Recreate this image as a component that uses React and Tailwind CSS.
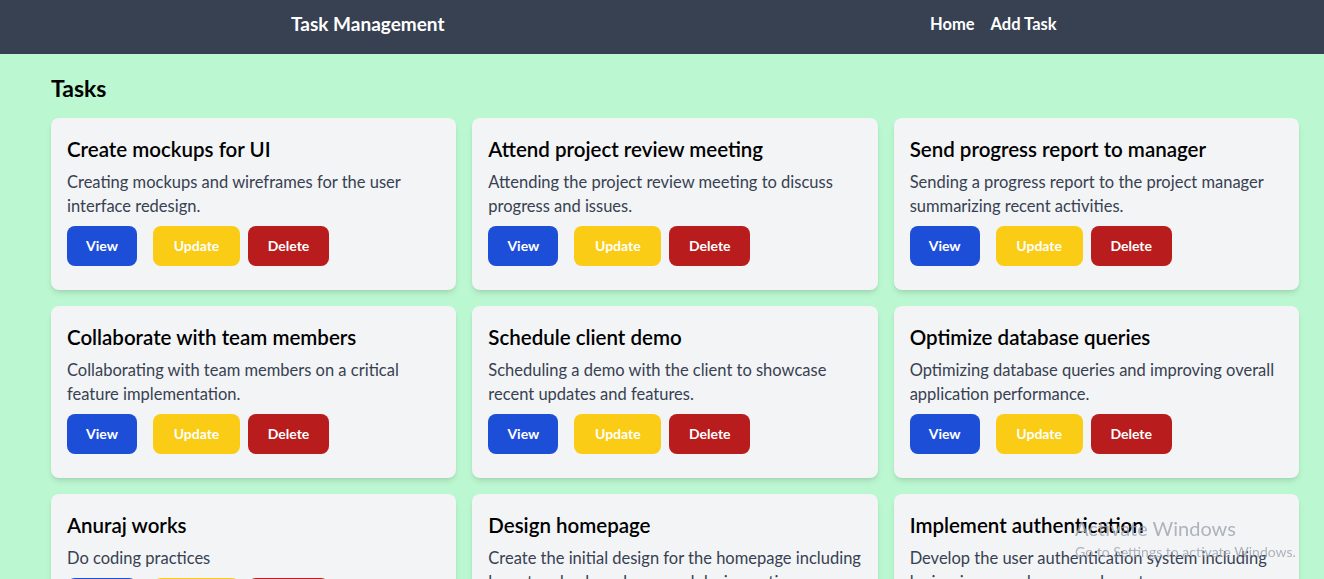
const tasks = [
  {
    title: "Create mockups for UI",
    description: "Creating mockups and wireframes for the user interface redesign.",
  },
  {
    title: "Attend project review meeting",
    description: "Attending the project review meeting to discuss progress and issues.",
  },
  {
    title: "Send progress report to manager",
    description: "Sending a progress report to the project manager summarizing recent activities.",
  },
  {
    title: "Collaborate with team members",
    description: "Collaborating with team members on a critical feature implementation.",
  },
  {
    title: "Schedule client demo",
    description: "Scheduling a demo with the client to showcase recent updates and features.",
  },
  {
    title: "Optimize database queries",
    description: "Optimizing database queries and improving overall application performance.",
  },
  {
    title: "Anuraj works",
    description: "Do coding practices",
  },
  {
    title: "Design homepage",
    description: "Create the initial design for the homepage including layout and color scheme and design options.",
  },
  {
    title: "Implement authentication",
    description: "Develop the user authentication system including login, signup and password reset.",
  },
];

function TaskCard({ task }) {
  return (
    <div className="rounded-lg bg-[#f3f4f6] px-4 pb-4 pt-[17px] shadow-md">

      {/* Title */}

      <h2 className="text-[20.5px] font-semibold leading-7 text-black">
        {task.title}
      </h2>

      {/* Description */}

      <p className="mt-[7px] text-[16.5px] leading-6 text-[#374151]">
        {task.description}
      </p>

      {/* Actions */}

      <div className="mb-2 mt-2 flex">
        <button className="mr-4 w-[70px] rounded-lg bg-[#1d4ed8] py-2.5 text-sm font-bold leading-5 text-white">
          View
        </button>
        <button className="mr-2 w-[87px] rounded-lg bg-[#facc15] py-2.5 text-sm font-bold leading-5 text-white">
          Update
        </button>
        <button className="w-[81px] rounded-lg bg-[#b91c1c] py-2.5 text-sm font-bold leading-5 text-white">
          Delete
        </button>
      </div>

    </div>
  );
}

export default function App() {
  return (
    <div className="min-h-screen bg-[#bbf7d0] font-['Lato','Noto_Sans',sans-serif]">

      {/* Navbar */}

      <nav className="flex h-[54px] items-start bg-[#374151] pt-[12px] text-white">
        <div className="w-[639px] pl-[291px]">
          <h1 className="text-[19px] font-bold leading-6">
            Task Management
          </h1>
        </div>
        <div className="flex gap-4 pl-[291px] text-[16.5px] font-bold leading-6">
          <a href="#">Home</a>
          <a href="#">Add Task</a>
        </div>
      </nav>

      {/* Tasks */}

      <main className="pl-[51px] pr-[25px] pt-[18px]">
        <h2 className="mb-[14px] text-[23px] font-bold leading-8 text-black">
          Tasks
        </h2>

        <div className="grid grid-cols-3 gap-4">
          {tasks.map((task) => (
            <TaskCard key={task.title} task={task} />
          ))}
        </div>
      </main>

      {/* Windows watermark */}

      <div className="pointer-events-none fixed left-[1075px] top-[514px] text-[#9ca3af]/80">
        <p className="text-[20px] leading-7">Activate Windows</p>
        <p className="text-[14px] leading-5">Go to Settings to activate Windows.</p>
      </div>

    </div>
  );
}
